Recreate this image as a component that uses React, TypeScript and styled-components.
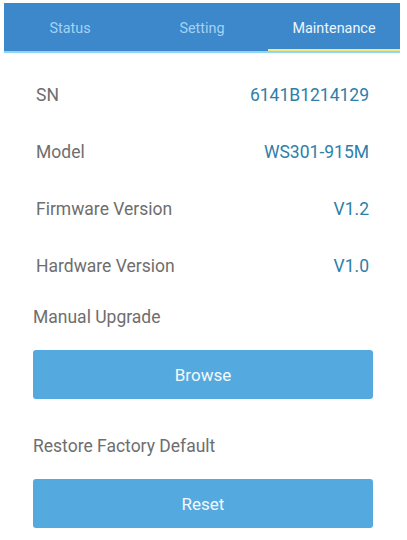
import * as React from 'react';
import styled, { createGlobalStyle } from 'styled-components';

const COLORS = {
  header: '#3c88cb',
  headerLine: '#8fd6f2',
  indicator: '#f3e77a',
  tabIdle: '#a3d2f4',
  tabActive: '#eef5fb',
  label: '#6e6e6e',
  value: '#2e7ea9',
  button: '#54a9df',
};

const GlobalStyle = createGlobalStyle`
  html, body {
    margin: 0;
    padding: 0;
    background: #ffffff;
    font-family: Roboto, 'Liberation Sans', sans-serif;
  }
`;

const StyledPage = styled.div`
  width: 407px;
  height: 540px;
  overflow: hidden;
  background: #ffffff;
`;

const StyledTabBar = styled.div`
  display: grid;
  grid-template-columns: repeat(3, 1fr);
  margin: 3px 7px 0 4px;
  background: ${COLORS.header};
  border-bottom: 2px solid ${COLORS.headerLine};
`;

const StyledTab = styled.div<{ $active?: boolean }>`
  height: 48px;
  display: flex;
  align-items: center;
  justify-content: center;
  padding-top: 2px;
  box-sizing: border-box;
  font-size: 14.4px;
  color: ${(p) => (p.$active ? COLORS.tabActive : COLORS.tabIdle)};
  box-shadow: ${(p) =>
    p.$active ? `inset 0 -2px 0 ${COLORS.indicator}` : 'none'};
`;

const StyledInfoList = styled.div`
  display: flex;
  flex-direction: column;
  margin-top: 13px;
  padding: 0 38px 0 36px;
`;

const StyledInfoRow = styled.div`
  height: 57px;
  display: flex;
  align-items: center;
  justify-content: space-between;
  font-size: 17.5px;
`;

const StyledLabel = styled.span`
  color: ${COLORS.label};
`;

const StyledValue = styled.span`
  color: ${COLORS.value};
`;

const StyledSection = styled.div`
  display: flex;
  flex-direction: column;
  gap: 21px;
  padding: 0 34px 0 33px;
  margin-top: 11px;

  & + & {
    margin-top: 35px;
  }
`;

const StyledSectionTitle = styled.div`
  font-size: 17.5px;
  line-height: 24px;
  color: ${COLORS.label};
`;

const StyledButton = styled.button`
  height: 49px;
  border: none;
  border-radius: 3px;
  background: ${COLORS.button};
  color: #f4f9fd;
  font-family: inherit;
  font-size: 17px;
  cursor: pointer;
`;

const tabs = ['Status', 'Setting', 'Maintenance'];

const info = [
  { label: 'SN', value: '6141B1214129' },
  { label: 'Model', value: 'WS301-915M' },
  { label: 'Firmware Version', value: 'V1.2' },
  { label: 'Hardware Version', value: 'V1.0' },
];

export default function App() {
  return (
    <StyledPage>
      <GlobalStyle />
      <StyledTabBar>
        {tabs.map((t) => (
          <StyledTab key={t} $active={t === 'Maintenance'}>
            {t}
          </StyledTab>
        ))}
      </StyledTabBar>
      <StyledInfoList>
        {info.map((row) => (
          <StyledInfoRow key={row.label}>
            <StyledLabel>{row.label}</StyledLabel>
            <StyledValue>{row.value}</StyledValue>
          </StyledInfoRow>
        ))}
      </StyledInfoList>
      <StyledSection>
        <StyledSectionTitle>Manual Upgrade</StyledSectionTitle>
        <StyledButton>Browse</StyledButton>
      </StyledSection>
      <StyledSection>
        <StyledSectionTitle>Restore Factory Default</StyledSectionTitle>
        <StyledButton>Reset</StyledButton>
      </StyledSection>
    </StyledPage>
  );
}
